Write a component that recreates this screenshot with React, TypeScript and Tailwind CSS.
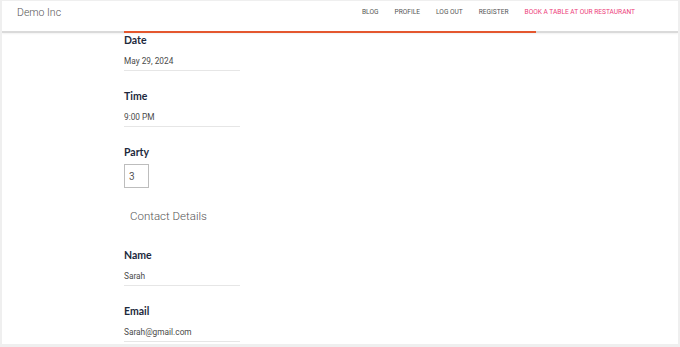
const navItems = ['Blog', 'Profile', 'Log Out', 'Register'];

const fields = [
  { label: 'Date', value: 'May 29, 2024' },
  { label: 'Time', value: '9:00 PM' },
];

const contact = [
  { label: 'Name', value: 'Sarah' },
  { label: 'Email', value: 'Sarah@gmail.com' },
];

function Field({ label, value, first }: { label: string; value: string; first?: boolean }) {
  return (
    <div className={first ? 'mt-0' : 'mt-[18px]'}>
      <p className="font-['Lato',sans-serif] text-[10.5px] leading-[14px] font-bold text-[#1d2a3d]">{label}</p>
      <div className="mt-[8px] w-[116px] border-b border-[#e6e6e6] pb-[3px]">
        <p className="font-['Roboto',sans-serif] text-[8.3px] leading-[12px] text-[#4a4a4a]">{value}</p>
      </div>
    </div>
  );
}

export default function App() {
  return (
    <div className="min-h-screen bg-[#efefef] pl-[2px] pr-[2px] pt-[1px] pb-[3px]">
      <div className="h-[343px] overflow-hidden bg-white">
        <header className="bg-white">
          <div className="flex h-[30px] items-center pb-[7px] pl-[15px] pr-[43px] font-['Roboto',sans-serif]">
            <span className="text-[10.5px] font-light text-[#555]">Demo Inc</span>
            <nav className="ml-auto flex items-center gap-[16px] text-[6.6px] uppercase text-[#555]">
              {navItems.map((n) => (
                <span key={n}>{n}</span>
              ))}
              <span className="text-[#ec407a]">Book a Table at our Restaurant</span>
            </nav>
          </div>
          <div className="flex h-[2px] shadow-[0_1px_2px_rgba(0,0,0,0.06)]">
            <div className="w-[122px] bg-[#dadada]" />
            <div className="w-[412px] bg-[#e4572e]" />
            <div className="flex-1 bg-[#dadada]" />
          </div>
        </header>

        <main className="pl-[122px]">
          {fields.map((f, i) => (
            <Field key={f.label} label={f.label} value={f.value} first={i === 0} />
          ))}

          <div className="mt-[18px]">
            <p className="font-['Lato',sans-serif] text-[10.5px] leading-[14px] font-bold text-[#1d2a3d]">Party</p>
            <div className="mt-[5px] flex h-[24px] w-[25px] items-center border border-[#bdbdbd] pl-[4px] font-['Roboto',sans-serif] text-[10px] text-[#555]">
              3
            </div>
          </div>

          <h3 className="mt-[20px] pl-[6px] font-['Roboto',sans-serif] text-[11.5px] leading-[16px] font-light text-[#555]">
            Contact Details
          </h3>

          <div className="mt-[24px]">
            {contact.map((f, i) => (
              <Field key={f.label} label={f.label} value={f.value} first={i === 0} />
            ))}
          </div>
        </main>
      </div>
    </div>
  );
}
